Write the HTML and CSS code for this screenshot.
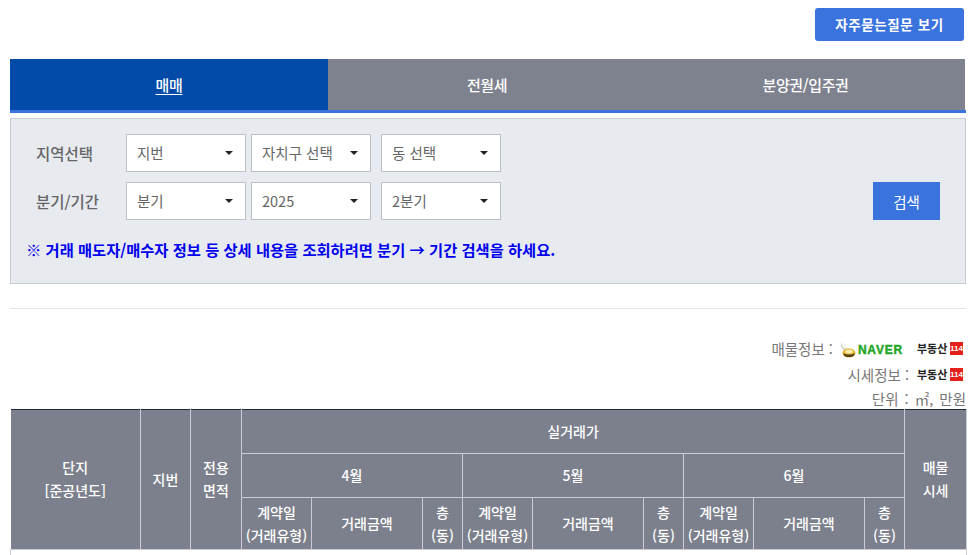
FILE: index.html
```html
<!DOCTYPE html>
<html lang="ko">
<head>
<meta charset="utf-8">
<title>실거래가</title>
<link rel="stylesheet" href="styles.css">
</head>
<body>
<div class="page">
  <div class="top-bar"><a class="faq" href="#">자주묻는질문 보기</a></div>
  <nav class="tabs">
    <a class="tab active" href="#">매매</a>
    <a class="tab" href="#">전월세</a>
    <a class="tab" href="#">분양권/입주권</a>
  </nav>
  <section class="search">
    <div class="row">
      <span class="label">지역선택</span>
      <div class="sel first"><span>지번</span></div>
      <div class="sel"><span>자치구 선택</span></div>
      <div class="sel third"><span>동 선택</span></div>
    </div>
    <div class="row">
      <span class="label">분기/기간</span>
      <div class="sel first"><span>분기</span></div>
      <div class="sel"><span>2025</span></div>
      <div class="sel third"><span>2분기</span></div>
      <button class="go" type="button">검색</button>
    </div>
    <p class="notice">※ 거래 매도자/매수자 정보 등 상세 내용을 조회하려면 분기 → 기간 검색을 하세요.</p>
  </section>
  <hr class="divider">
  <div class="info">
    <div class="info-line l1"><span>매물정보 :</span>
      <svg class="wing" width="17" height="17" viewBox="0 0 17 17"><path d="M1 0c.5 4 3 7 8 8L6 10C3 8 0 5 1 0z" fill="#cfcfc0"/><path d="M4 1c1 3 3 5 6 6L8 8C6 7 4 4 4 1z" fill="#e9e9de"/><ellipse cx="9" cy="11" rx="6.500" ry="4.500" fill="#e7b526"/><path d="M3 11c3 2 9 2 12 0l-1 2.500c-2 2-8 2-10 0z" fill="#4f4118"/><ellipse cx="9" cy="9.500" rx="3.800" ry="2" fill="#f8eab0"/></svg>
      <b class="naver">NAVER</b><span class="r114"><i>부동산</i><b>114</b></span></div>
    <div class="info-line l2"><span>시세정보 :</span><span class="r114"><i>부동산</i><b>114</b></span></div>
    <div class="info-line l3"><span>단위 : ㎡, 만원</span></div>
  </div>
  <table class="grid">
    <colgroup>
      <col class="c-a"><col class="c-b"><col class="c-c">
      <col class="c-d"><col class="c-e"><col class="c-f">
      <col class="c-d"><col class="c-e"><col class="c-f">
      <col class="c-d"><col class="c-e"><col class="c-f">
      <col class="c-g">
    </colgroup>
    <thead>
      <tr class="r1">
        <th rowspan="3" class="side">단지<br>[준공년도]</th>
        <th rowspan="3">지번</th>
        <th rowspan="3" class="side">전용<br>면적</th>
        <th colspan="9">실거래가</th>
        <th rowspan="3" class="side">매물<br>시세</th>
      </tr>
      <tr class="r2">
        <th colspan="3">4월</th><th colspan="3">5월</th><th colspan="3">6월</th>
      </tr>
      <tr class="r3">
        <th>계약일<br>(거래유형)</th><th>거래금액</th><th>층<br>(동)</th>
        <th>계약일<br>(거래유형)</th><th>거래금액</th><th>층<br>(동)</th>
        <th>계약일<br>(거래유형)</th><th>거래금액</th><th>층<br>(동)</th>
      </tr>
    </thead>
    <tbody>
      <tr class="blank"><td colspan="13"></td></tr>
    </tbody>
  </table>
</div>
</body>
</html>
```
FILE: styles.css
```css
* { box-sizing: border-box; }
html, body { margin: 0; padding: 0; background: #fff; }
body {
  font-family: "Noto Sans CJK KR", "Noto Sans", sans-serif;
  font-size: 15px;
  color: #666;
  height: 555px;
  overflow: hidden;
}
.page { width: 973px; padding: 0 7px 0 10px; }

.top-bar { display: flex; justify-content: flex-end; padding: 8px 2px 0 0; height: 59px; }
.faq {
  width: 149px; height: 33px;
  display: flex; align-items: center; justify-content: center;
  background: #3a73de; color: #fff; border-radius: 3px; padding-bottom: 1px;
  font-size: 13.5px; font-weight: 700; text-decoration: none; letter-spacing: .6px;
}

.tabs { display: flex; height: 54px; width: 956px; border-bottom: 3px solid #3a73de; }
.tab {
  flex: 1 1 0; display: flex; align-items: center; justify-content: center;
  background: #7e828e; color: #fff; font-size: 15px; font-weight: 500;
  text-decoration: none; letter-spacing: -.4px; padding-bottom: 1px;
}
.tab:first-child { flex: 0 0 318px; }
.tab:nth-child(2) { flex: 0 0 318px; }
.tab:last-child { margin-right: 1px; }
.tab.active { background: #034ba8; text-decoration: underline; text-underline-offset: 3px; }

.search {
  margin-top: 5px; width: 956px; height: 166px;
  background: #e7eaef; border: 1px solid #c9ccd2;
  padding: 15px 25px 0 25px;
}
.row { display: flex; align-items: center; height: 38px; margin-bottom: 10px; }
.label { width: 90px; font-weight: 500; font-size: 15.5px; color: #666; padding-bottom: 1px; }
.sel {
  position: relative; width: 120px; height: 38px;
  background: #fff; border: 1px solid #bdbfc5;
  display: flex; align-items: center; padding: 0 0 2px 10px;
  font-size: 14.5px; color: #666; margin-right: 5px;
}
.sel.third { margin-left: 5px; margin-right: 0; }
.sel::after {
  content: ""; position: absolute; right: 12px; top: 16px;
  border-left: 4px solid transparent; border-right: 4px solid transparent;
  border-top: 4px solid #222;
}
.go {
  margin-left: auto; margin-right: 0; width: 67px; height: 38px; border: 0;
  background: #3a73de; color: #fff; font: inherit; font-size: 14.5px;
}
.notice { margin: 17px 0 0 -10px; font-size: 15.3px; font-weight: 700; color: #0000ee; line-height: 24px; white-space: nowrap; }

.divider { margin: 24px 0 0; width: 956px; height: 1px; border: 0; background: #e4e5e8; }

.info { width: 956px; height: 100px; }
.info-line { display: flex; justify-content: flex-end; align-items: center; font-size: 14.5px; color: #777; }
.l1 { padding-top: 26px; height: 52px; margin-right: 3px; }
.l2 { height: 26px; margin-right: 3px; }
.l3 { height: 22px; word-spacing: 2px; }
.wing { margin: 4px 0 0 7px; }
.naver { font: 900 12px/1 "Liberation Sans", sans-serif; color: #1fa51f; letter-spacing: .8px; margin: 4px 6px 0 1px; -webkit-text-stroke: .4px #1fa51f; }
.r114 { display: inline-flex; align-items: center; margin-left: 8px; }
.r114 i { width: 33px; font-style: normal; font-weight: 700; font-size: 11px; color: #222; white-space: nowrap; }
.r114 b { width: 13px; height: 13px; background: #e4211a; color: #fff; font: 700 8px/13px "Liberation Sans", sans-serif; text-align: center; }

.grid {
  width: 956px; table-layout: fixed; border-collapse: collapse;
  border-top: 1px solid #222a3a;
  color: #fff; font-size: 14px;
}
.c-a { width: 130px; } .c-b { width: 50px; } .c-c { width: 51px; }
.c-d { width: 70px; } .c-e { width: 111px; } .c-f { width: 40px; } .c-g { width: 62px; }
.grid th {
  background: #7c808c; border: 1px solid #c9ccd6; font-weight: 500; padding: 0;
  line-height: 23px; text-align: center; white-space: nowrap;
}
.grid thead tr:first-child th { border-top: 0; }
.grid th:first-child { border-left: 0; }
.grid th.side { padding-bottom: 2px; }
.r1 { height: 44px; } .r2 { height: 44px; } .r3 { height: 52px; }
.r3 th { font-size: 14px; line-height: 23px; }
.blank { height: 6px; }
.blank td { border-left: 1px solid #c9ccd6; border-right: 1px solid #c9ccd6; padding: 0; }
```
